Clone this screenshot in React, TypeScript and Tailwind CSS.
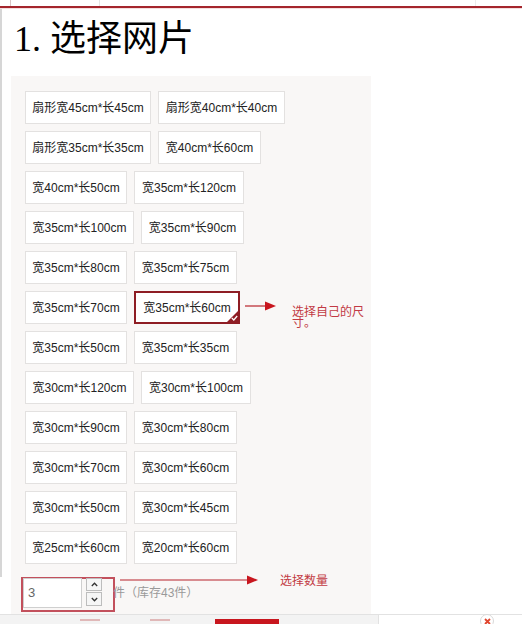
import React from 'react';

type Size = { label: string; w: string; selected?: boolean };

const rows: Size[][] = [
  [{ label: '扇形宽45cm*长45cm', w: 'w-[126px]' }, { label: '扇形宽40cm*长40cm', w: 'w-[127px]' }],
  [{ label: '扇形宽35cm*长35cm', w: 'w-[126px]' }, { label: '宽40cm*长60cm', w: 'w-[103px]' }],
  [{ label: '宽40cm*长50cm', w: 'w-[102px]' }, { label: '宽35cm*长120cm', w: 'w-[110px]' }],
  [{ label: '宽35cm*长100cm', w: 'w-[109px]' }, { label: '宽35cm*长90cm', w: 'w-[103px]' }],
  [{ label: '宽35cm*长80cm', w: 'w-[102px]' }, { label: '宽35cm*长75cm', w: 'w-[103px]' }],
  [{ label: '宽35cm*长70cm', w: 'w-[102px]' }, { label: '宽35cm*长60cm', w: 'w-[106px]', selected: true }],
  [{ label: '宽35cm*长50cm', w: 'w-[102px]' }, { label: '宽35cm*长35cm', w: 'w-[103px]' }],
  [{ label: '宽30cm*长120cm', w: 'w-[109px]' }, { label: '宽30cm*长100cm', w: 'w-[110px]' }],
  [{ label: '宽30cm*长90cm', w: 'w-[102px]' }, { label: '宽30cm*长80cm', w: 'w-[103px]' }],
  [{ label: '宽30cm*长70cm', w: 'w-[102px]' }, { label: '宽30cm*长60cm', w: 'w-[103px]' }],
  [{ label: '宽30cm*长50cm', w: 'w-[102px]' }, { label: '宽30cm*长45cm', w: 'w-[103px]' }],
  [{ label: '宽25cm*长60cm', w: 'w-[102px]' }, { label: '宽20cm*长60cm', w: 'w-[103px]' }],
];

const Arrow: React.FC<{ width: number }> = ({ width }) => (
  <svg width={width} height={10} viewBox={`0 0 ${width} 10`} className="block shrink-0">
    <line x1={0} y1={5} x2={width - 10} y2={5} stroke="#b8222b" strokeWidth={1.2} />
    <polygon points={`${width - 11},0.5 ${width},5 ${width - 11},9.5`} fill="#c8161e" />
  </svg>
);

const SizeButton: React.FC<{ item: Size }> = ({ item }) => (
  <div
    className={`${item.w} relative h-[33px] flex items-center justify-center bg-white text-[12px] text-[#222] whitespace-nowrap ${
      item.selected ? 'border-2 border-[#8e1d24]' : 'border border-[#e3e1e0]'
    }`}
  >
    {item.label}
    {item.selected && (
      <span className="absolute right-0 bottom-0 w-0 h-0 border-l-[11px] border-l-transparent border-b-[11px] border-b-[#8e1d24]">
        <svg width={7} height={6} viewBox="0 0 7 6" className="absolute -left-[7px] top-[4px]">
          <path d="M0.8 3 L2.8 5 L6.2 1" stroke="#fff" strokeWidth={1.3} fill="none" />
        </svg>
      </span>
    )}
  </div>
);

export default function App() {
  return (
    <div className="w-[522px] h-[624px] overflow-hidden bg-white relative font-['Liberation_Sans','Noto_Sans_CJK_SC',sans-serif]">
      {/* top strip */}
      <div className="flex h-[6px]">
        <div className="w-[11px] border-r border-[#d9c6c6]" />
        <div className="w-[89px] border-r border-[#e5e5e5]" />
        <div className="w-[376px] border-r border-[#ececec]" />
        <div className="flex-1" />
      </div>
      <div className="h-[2px] bg-[#a4252c]" />
      <div className="h-[1px] bg-[#f4dede]" />

      <div className="border-l-2 border-[#d6d6d6] h-[568px]">
        <h1 className="pl-[12px] pt-[10px] text-[36px] leading-[40px] text-black font-['Liberation_Serif','Noto_Sans_CJK_SC',serif]">
          1. 选择网片
        </h1>

        <div className="ml-[9px] mt-[17px] w-[360px] h-[560px] bg-[#f9f7f6] pt-[15px] pl-[14px]">
          <div className="flex flex-col gap-[7px]">
            {rows.map((row, i) => (
              <div key={i} className="flex items-start h-[33px]">
                <div className="flex gap-[7px]">
                  {row.map((item) => (
                    <SizeButton key={item.label} item={item} />
                  ))}
                </div>
                {row.some((s) => s.selected) && (
                  <>
                    <div className="ml-[5px] mt-[10px]">
                      <Arrow width={31} />
                    </div>
                    <div className="ml-[16px] mt-[16px] w-[74px] text-[12px] leading-[11px] text-[#c23a44]">
                      选择自己的尺寸。
                    </div>
                  </>
                )}
              </div>
            ))}
          </div>

          {/* quantity */}
          <div className="flex items-start mt-[13px] -ml-[4px]">
            <div className="flex gap-[4px] border-2 border-[#c2505c] pb-[2px] pr-[11px]">
              <div className="w-[59px] h-[30px] -mt-[1px] bg-white border border-[#cfcfcf] flex items-center pl-[4px] text-[13px] text-[#666]">
                3
              </div>
              <div className="flex flex-col gap-[1px] -mt-[1px]">
                <div className="w-[16px] h-[13px] border border-[#bdbdbd] bg-[#f6f6f6] flex items-center justify-center">
                  <svg width={7} height={5} viewBox="0 0 7 5">
                    <path d="M0.8 4 L3.5 1.2 L6.2 4" stroke="#333" strokeWidth={1.3} fill="none" />
                  </svg>
                </div>
                <div className="w-[16px] h-[14px] border border-[#bdbdbd] bg-[#f6f6f6] flex items-center justify-center">
                  <svg width={7} height={5} viewBox="0 0 7 5">
                    <path d="M0.8 1 L3.5 3.8 L6.2 1" stroke="#333" strokeWidth={1.3} fill="none" />
                  </svg>
                </div>
              </div>
            </div>
            <div className="-ml-[2px] flex flex-col">
              <div className="flex items-center h-[10px] mt-[-2px] pl-[7px]">
                <Arrow width={138} />
                <span className="ml-[22px] text-[12px] text-[#c23a44] leading-[12px] mt-[2px]">选择数量</span>
              </div>
              <span className="mt-[1px] text-[12px] leading-[14px] text-[#999]">件（库存43件）</span>
            </div>
          </div>
        </div>
      </div>

      {/* floating bottom bar (cut off at window edge) */}
      <div className="fixed left-0 bottom-0 w-[522px] h-[10px] flex">
        <div className="w-[378px] h-full bg-[#f3f3f3] border-t border-[#e2e2e2] relative">
          <span className="absolute left-[80px] top-[4px] w-[20px] h-[2px] bg-[#e0b8b8]" />
          <span className="absolute left-[150px] top-[4px] w-[20px] h-[2px] bg-[#e0b8b8]" />
          <div className="absolute left-[215px] top-[4px] w-[64px] h-[8px] bg-[#c8161e]" />
        </div>
        <div className="w-[112px] h-full bg-white border-t border-l border-[#e2e2e2]" />
        <div className="flex-1 bg-white border-t border-[#e2e2e2]" />
      </div>
      <div className="fixed left-[480px] bottom-[-4px] w-[14px] h-[14px] rounded-full bg-white border border-[#d8d8d8] flex items-center justify-center">
        <svg width={7} height={7} viewBox="0 0 7 7">
          <path d="M1 1 L6 6 M6 1 L1 6" stroke="#e0452e" strokeWidth={1.8} />
        </svg>
      </div>
    </div>
  );
}
